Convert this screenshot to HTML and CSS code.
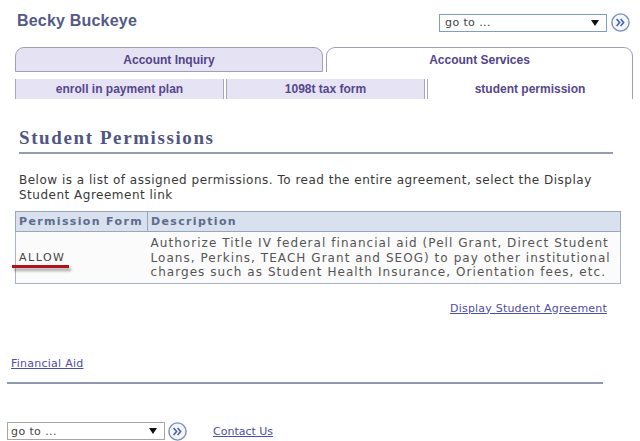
FILE: index.html
```html
<!DOCTYPE html>
<html>
	<head>
		<meta charset="utf-8">
		<title>Student Permissions</title>
		<link rel="stylesheet" href="styles.css">
	</head>
	<body>
		<div class="topbar">
			<h1 class="user-name">Becky Buckeye</h1>
			<div class="jump">
				<div class="select select-top"><span>go to ...</span><svg class="caret" width="8" height="6" viewBox="0 0 8 6"><polygon points="0,0 8,0 4,6" fill="#111"/></svg></div>
				<button class="go" type="button"><svg width="19" height="19" viewBox="0 0 19 19"><circle cx="9.5" cy="9.5" r="8.6" fill="#f4f6fb" stroke="#7b8cb6" stroke-width="1.4"/><polyline points="5.6,6 8.6,9.5 5.6,13" fill="none" stroke="#4762ad" stroke-width="1.6"/><polyline points="9.6,6 12.6,9.5 9.6,13" fill="none" stroke="#4762ad" stroke-width="1.6"/></svg></button>
			</div>
		</div>

		<div class="tabs">
			<div class="tab-row">
				<div class="tab">Account Inquiry</div>
				<div class="tab active">Account Services</div>
			</div>
			<div class="subtab-row">
				<div class="subtab">enroll in payment plan</div>
				<div class="subtab">1098t tax form</div>
				<div class="subtab current">student permission</div>
			</div>
		</div>

		<h2 class="section-title">Student Permissions</h2>
		<p class="intro">Below is a list of assigned permissions. To read the entire agreement, select the Display Student Agreement link</p>

		<table class="perm-table">
			<thead>
				<tr>
					<th class="col-form">Permission Form</th>
					<th>Description</th>
				</tr>
			</thead>
			<tbody>
				<tr>
					<td class="col-form"><span class="allow">ALLOW</span></td>
					<td class="desc">Authorize Title IV federal financial aid (Pell Grant, Direct Student Loans, Perkins, TEACH Grant and SEOG) to pay other institutional charges such as Student Health Insurance, Orientation fees, etc.</td>
				</tr>
			</tbody>
		</table>

		<div class="agreement"><a href="#">Display Student Agreement</a></div>

		<div class="page-links"><a href="#">Financial Aid</a></div>
		<div class="rule"></div>

		<div class="bottombar">
			<div class="select select-bottom"><span>go to ...</span><svg class="caret" width="8" height="6" viewBox="0 0 8 6"><polygon points="0,0 8,0 4,6" fill="#111"/></svg></div>
			<button class="go" type="button"><svg width="19" height="19" viewBox="0 0 19 19"><circle cx="9.5" cy="9.5" r="8.6" fill="#f4f6fb" stroke="#7b8cb6" stroke-width="1.4"/><polyline points="5.6,6 8.6,9.5 5.6,13" fill="none" stroke="#4762ad" stroke-width="1.6"/><polyline points="9.6,6 12.6,9.5 9.6,13" fill="none" stroke="#4762ad" stroke-width="1.6"/></svg></button>
			<a class="contact" href="#">Contact Us</a>
		</div>
	</body>
</html>
```

FILE: styles.css
```css
*{
	margin: 0;
	padding: 0;
	box-sizing: border-box;
}
body{
	font-family: "DejaVu Sans", Verdana, sans-serif;
	font-size: 11px;
	color: #383838;
	background: #fff;
}
a{
	color: #4d4dab;
}

/* header: name + quick jump */
.topbar{
	display: flex;
	justify-content: space-between;
	align-items: flex-start;
	height: 47px;
	padding: 11px 10px 0 17px;
}
.user-name{
	font: bold 16px/19px "Liberation Sans", Arial, sans-serif;
	letter-spacing: 0.2px;
	color: #545a87;
}
.jump{
	display: flex;
	align-items: center;
	gap: 4px;
	margin-top: 2px;
}
.select{
	display: flex;
	align-items: center;
	justify-content: space-between;
	height: 18px;
	background: #fff;
	color: #444;
	font-size: 11px;
	letter-spacing: 0.4px;
}
.select-top{
	width: 168px;
	border: 1px solid #7f9bcd;
	padding: 0 7px 0 5px;
}
.select-bottom{
	width: 158px;
	border: 1px solid #a6a6a6;
	padding: 0 7px 0 3px;
}
.go{
	display: flex;
	border: 0;
	background: none;
}

/* tabs */
.tabs{
	margin: 0 7px 0 15px;
}
.tab-row{
	display: flex;
	gap: 3px;
	height: 25px;
}
.tab{
	display: flex;
	align-items: center;
	justify-content: center;
	width: 308px;
	border: 1px solid #a19dbb;
	border-radius: 9px 9px 0 0;
	background: #e5e3f3;
	font: bold 12px "Liberation Sans", Arial, sans-serif;
	color: #52448a;
}
.tab.active{
	flex: 1;
	background: #fff;
	border-bottom: none;
}
.subtab-row{
	display: flex;
	height: 27px;
	padding-top: 7px;
	border-right: 1px solid #a19dbb;
}
.subtab{
	display: flex;
	align-items: center;
	justify-content: center;
	width: 201px;
	border-left: 4px double #aaa7bd;
	background: #e5e3f4;
	background-clip: padding-box;
	font: bold 12px "Liberation Sans", Arial, sans-serif;
	color: #56478c;
}
.subtab:first-child{
	width: 208px;
	border-left: 1px solid #aaa7bd;
}
.subtab.current{
	flex: 1;
	background: #fff;
}

/* page body */
.section-title{
	margin: 29px 27px 0 19px;
	padding-bottom: 4px;
	border-bottom: 2px solid #959cb0;
	font: bold 19px/20px "Liberation Serif", "Times New Roman", serif;
	letter-spacing: 1.6px;
	color: #4f5681;
}
.intro{
	margin: 19px 27px 0 19px;
	font-size: 12px;
	line-height: 15px;
	letter-spacing: 0.5px;
}
.perm-table{
	margin: 8px 0 0 15px;
	width: 606px;
	border-collapse: collapse;
	border: 1px solid #aab3c6;
}
.perm-table th{
	height: 20px;
	padding: 0 3px;
	background: #d9e1ee;
	border: 1px solid #98a6bf;
	text-align: left;
	font-weight: bold;
	letter-spacing: 1.35px;
	color: #5d6b8d;
}
.perm-table .col-form{
	width: 132px;
}
.perm-table td{
	padding: 4px 3px 3px;
	background: #fbfbfb;
	line-height: 14.5px;
	color: #555;
	vertical-align: middle;
}
.desc{
	font-size: 12px;
	letter-spacing: 1.05px;
}
.allow{
	position: relative;
	letter-spacing: 1.5px;
	color: #444;
}
/* red marker under the value */
.allow::after{
	content: "";
	position: absolute;
	left: -7px;
	right: -4px;
	top: 14px;
	height: 3px;
	background: #b3121c;
	box-shadow: 2px 3px 3px rgba(0,0,0,0.35);
}
.agreement{
	margin: 17px 33px 0 0;
	line-height: 15px;
	letter-spacing: 0.2px;
	text-align: right;
}
.page-links{
	margin: 40px 0 0 11px;
	line-height: 15px;
	letter-spacing: 0.25px;
}
.rule{
	margin: 11px 37px 0 7px;
	height: 2px;
	background: #8f98ae;
}
.bottombar{
	display: flex;
	align-items: center;
	margin: 38px 0 0 7px;
}
.bottombar .go{
	margin-left: 3px;
}
.contact{
	margin-left: 26px;
}
```
